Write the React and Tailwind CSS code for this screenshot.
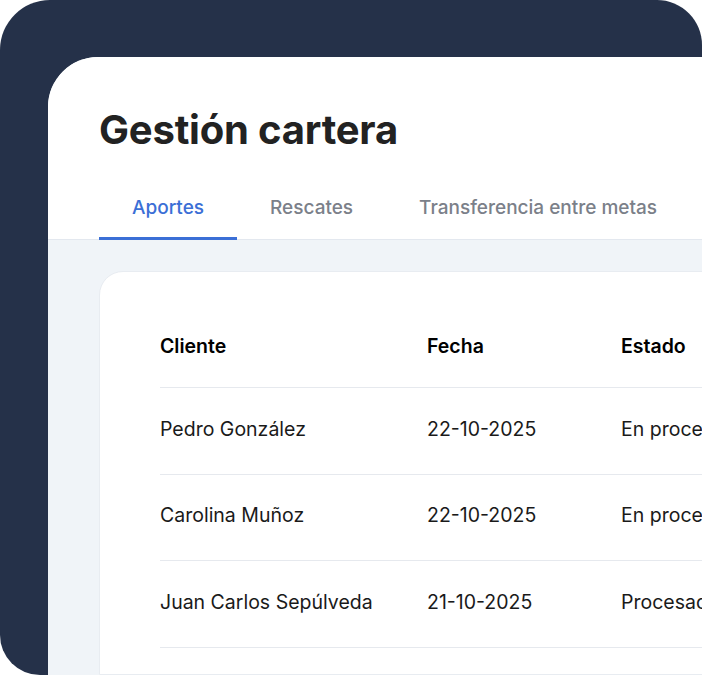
import React from "react";

const tabs = ["Aportes", "Rescates", "Transferencia entre metas"];

const rows = [
  { cliente: "Pedro González", fecha: "22-10-2025", estado: "En proceso" },
  { cliente: "Carolina Muñoz", fecha: "22-10-2025", estado: "En proceso" },
  { cliente: "Juan Carlos Sepúlveda", fecha: "21-10-2025", estado: "Procesado" },
];

const App = () => {
  return (
    <div className="w-[702px] h-[675px] bg-white">
      <div
        className="w-[702px] h-[675px] bg-[#253149] rounded-tl-[50px] rounded-tr-[45px] rounded-bl-[40px] overflow-hidden pl-[48px] pt-[57px]"
        style={{ fontFamily: "Inter, 'Noto Sans', sans-serif" }}
      >
        <div className="w-[720px] h-full bg-[#f0f4f8] rounded-tl-[50px] flex flex-col overflow-hidden">
          <div className="bg-white border-b border-[#e3e8ef] pt-[49px]">
            <h1 className="ml-[51px] text-[40px] leading-[48px] font-bold text-[#222222] tracking-[-0.2px]">
              Gestión cartera
            </h1>
            <div className="flex ml-[51px] mt-[34px]">
              {tabs.map((t, i) => (
                <div
                  key={t}
                  className={
                    i === 0
                      ? "px-[33px] pt-[6px] pb-[15px] leading-[28px] whitespace-nowrap text-[19px] font-medium text-[#3b6fd6] border-b-[3px] border-[#3b6fd6] mb-[-1px]"
                      : "px-[33px] pt-[6px] pb-[15px] leading-[28px] whitespace-nowrap text-[19px] font-medium text-[#7b8089] border-b-[3px] border-transparent mb-[-1px]"
                  }
                >
                  {t}
                </div>
              ))}
            </div>
          </div>
          <div className="pl-[51px] pt-[31px] flex-1">
            <div className="bg-white rounded-tl-[24px] h-full border border-[#e8ecf1] pt-[34px] pl-[60px]">
              <div className="flex h-[82px] items-center border-b border-[#e6e9ee] text-[19.5px] font-semibold text-black">
                <div className="w-[267px]">Cliente</div>
                <div className="w-[194px]">Fecha</div>
                <div className="flex-1 whitespace-nowrap">Estado</div>
              </div>
              {rows.map((r) => (
                <div
                  key={r.cliente}
                  className="flex h-[86.7px] items-center pb-[3px] border-b border-[#e6e9ee] text-[19.5px] text-[#1a1a1a]"
                >
                  <div className="w-[267px] whitespace-nowrap">{r.cliente}</div>
                  <div className="w-[194px]">{r.fecha}</div>
                  <div className="flex-1 whitespace-nowrap">{r.estado}</div>
                </div>
              ))}
            </div>
          </div>
        </div>
      </div>
    </div>
  );
};

export default App;
